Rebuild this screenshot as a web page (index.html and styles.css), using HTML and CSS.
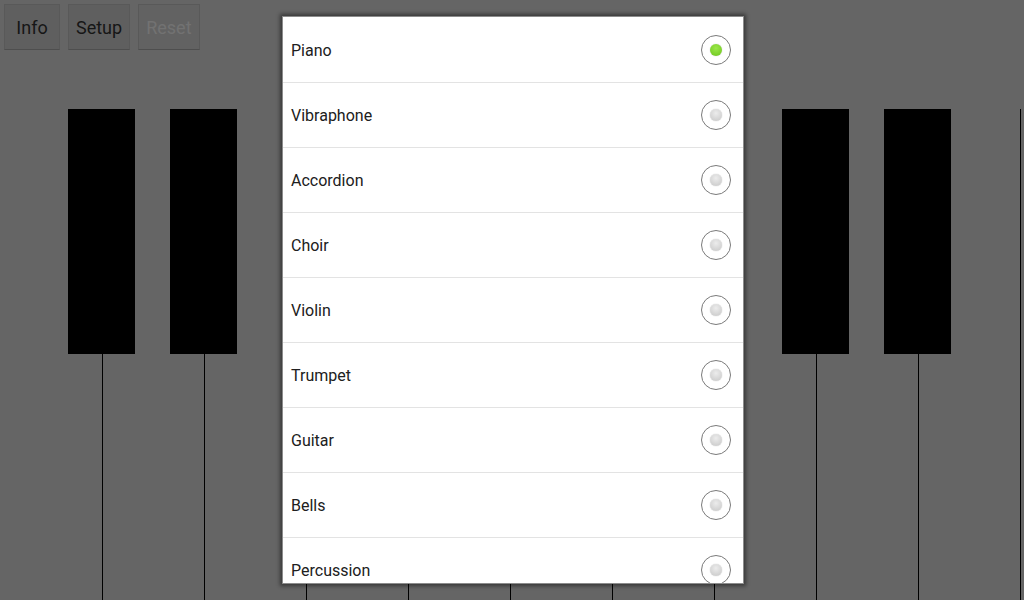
FILE: index.html
```html
<!DOCTYPE html>
<html lang="en">
<head>
    <meta charset="UTF-8">
    <meta name="viewport" content="width=device-width, initial-scale=1.0">
    <title>Piano</title>
    <link rel="stylesheet" href="styles.css">
</head>
<body>
    <div class="toolbar">
        <button class="tool-btn">Info</button>
        <button class="tool-btn">Setup</button>
        <button class="tool-btn" disabled>Reset</button>
    </div>

    <div class="keyboard">
        <div class="white-key"></div>
        <div class="white-key"></div>
        <div class="white-key"></div>
        <div class="white-key"></div>
        <div class="white-key"></div>
        <div class="white-key"></div>
        <div class="white-key"></div>
        <div class="white-key"></div>
        <div class="white-key"></div>
        <div class="white-key"></div>
        <div class="white-key"></div>

        <!-- black keys sit on top of the white key seams -->
        <div class="black-key" style="left: 68px"></div>
        <div class="black-key" style="left: 170px"></div>
        <div class="black-key" style="left: 374px"></div>
        <div class="black-key" style="left: 476px"></div>
        <div class="black-key" style="left: 578px"></div>
        <div class="black-key" style="left: 782px"></div>
        <div class="black-key" style="left: 884px"></div>
    </div>

    <div class="dialog">
        <div class="option">
            <span>Piano</span>
            <span class="radio checked"></span>
        </div>
        <div class="option">
            <span>Vibraphone</span>
            <span class="radio"></span>
        </div>
        <div class="option">
            <span>Accordion</span>
            <span class="radio"></span>
        </div>
        <div class="option">
            <span>Choir</span>
            <span class="radio"></span>
        </div>
        <div class="option">
            <span>Violin</span>
            <span class="radio"></span>
        </div>
        <div class="option">
            <span>Trumpet</span>
            <span class="radio"></span>
        </div>
        <div class="option">
            <span>Guitar</span>
            <span class="radio"></span>
        </div>
        <div class="option">
            <span>Bells</span>
            <span class="radio"></span>
        </div>
        <div class="option">
            <span>Percussion</span>
            <span class="radio"></span>
        </div>
    </div>
</body>
</html>
```

FILE: styles.css
```css
body {
    margin: 0;
    width: 1024px;
    height: 600px;
    overflow: hidden;
    position: relative;
    background-color: #656565; /* dimmed behind the dialog */
    font-family: Roboto, "Noto Sans", sans-serif;
}

.toolbar {
    display: flex;
    gap: 8px;
    padding: 4px;
    height: 46px;
}

.tool-btn {
    height: 46px;
    padding: 0 7px;
    font-family: Roboto, "Noto Sans", sans-serif;
    font-size: 18px;
    color: #161616;
    background-color: #5f5f5f;
    border: 1px solid #595959;
    border-bottom-color: #4e4e4e;
    border-radius: 1px;
}

.tool-btn:first-child {
    width: 56px;
}

.tool-btn:disabled {
    color: #727272;
    background-color: #626262;
}

.keyboard {
    position: relative;
    display: flex;
    margin-top: 55px;
    height: 491px;
    overflow: hidden;
}

.white-key {
    flex: 0 0 102px;
    border-left: 1px solid #000;
    box-sizing: border-box;
}

.white-key:first-child {
    border-left: none;
}

.black-key {
    position: absolute;
    top: 0;
    width: 67px;
    height: 245px;
    background-color: #000;
}

.dialog {
    position: absolute;
    left: 282px;
    top: 16px;
    width: 460px;
    height: 565px;
    padding-top: 1px;
    background-color: #fff;
    border: 1px solid #8c8c8c;
    box-shadow: 0 0 4px 2px rgba(0, 0, 0, 0.45);
    overflow: hidden;
}

.option {
    display: flex;
    align-items: center;
    justify-content: space-between;
    height: 64px;
    padding: 0 12px 0 8px;
    border-bottom: 1px solid #e3e3e3;
    font-size: 16px;
    color: #202020;
}

.radio {
    position: relative;
    width: 28px;
    height: 28px;
    border: 1px solid #7a7a7a;
    border-radius: 50%;
    background-color: #fff;
}

.radio::after {
    content: "";
    position: absolute;
    left: 8px;
    top: 8px;
    width: 12px;
    height: 12px;
    border-radius: 50%;
    background: radial-gradient(circle at 50% 35%, #ececec, #c6c6c6);
    box-shadow: 0 0 1px rgba(0, 0, 0, 0.35);
}

.radio.checked::after {
    background: radial-gradient(circle at 50% 35%, #9be84a, #6cc41c);
}
```
